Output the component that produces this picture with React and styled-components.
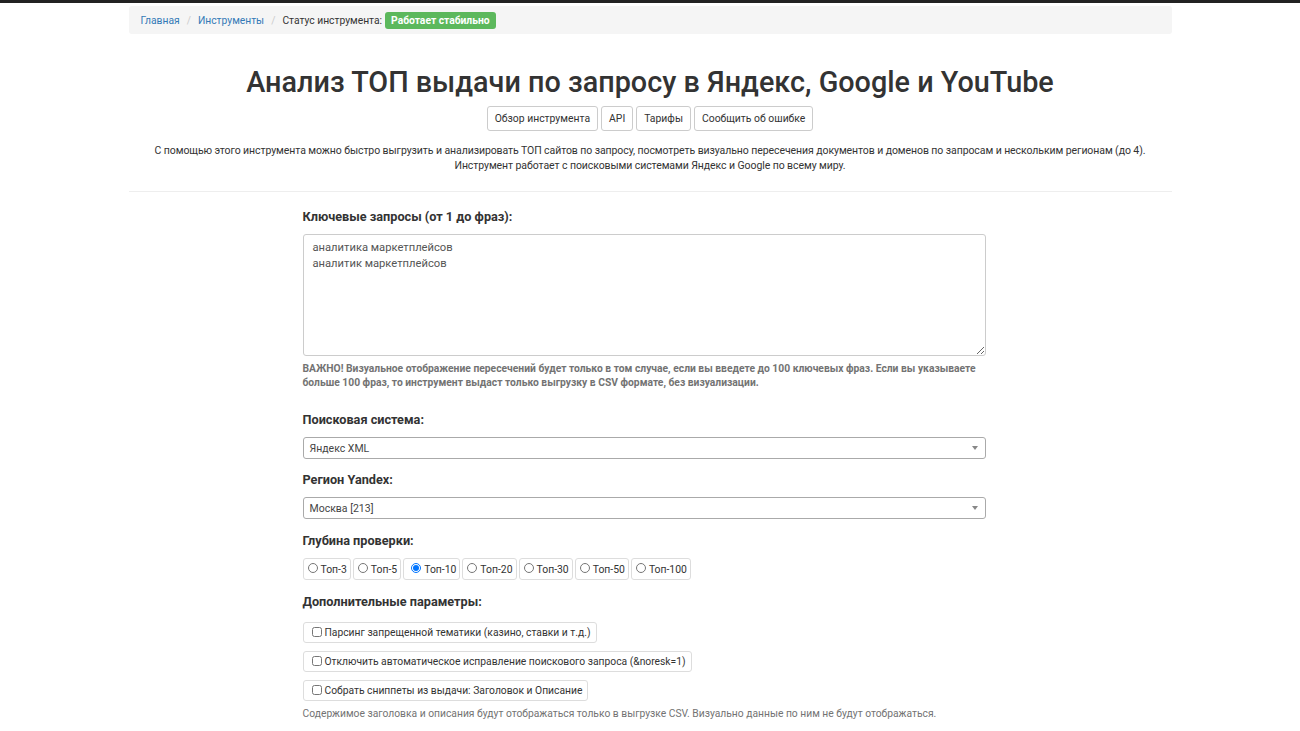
import React from 'react';
import styled, { createGlobalStyle } from 'styled-components';

const GlobalStyle = createGlobalStyle`
  body {
    margin: 0;
    background: #fff;
    font-family: Roboto, "Liberation Sans", Arial, sans-serif;
    color: #333;
  }
`

const TopLine = styled.div`
  height: 3px;
  background: #222;
`
const Container = styled.div`
  width: 1043px;
  margin: 0 auto;
`
const Breadcrumb = styled.div`
  margin-top: 3px;
  height: 28px;
  background: #f5f5f5;
  border-radius: 3px;
  display: flex;
  align-items: center;
  padding: 0 12px;
  font-size: 10.3px;
`
const Crumb = styled.a`
  color: #337ab7;
  text-decoration: none;
`
const Sep = styled.span`
  color: #ccc;
  padding: 0 7px;
`
const CrumbText = styled.span`
  color: #333;
`
const Badge = styled.span`
  margin-left: 3px;
  background: #5cb85c;
  color: #fff;
  font-weight: 700;
  font-size: 10.3px;
  padding: 2px 6px;
  border-radius: 3px;
  line-height: 13px;
`
const Title = styled.h1`
  margin: 31px 0 0;
  text-align: center;
  font-size: 28.8px;
  font-weight: 500;
  line-height: 34px;
  color: #333;
`
const Buttons = styled.div`
  display: flex;
  justify-content: center;
  gap: 3px;
  margin-top: 7px;
`
const Btn = styled.button`
  font-family: inherit;
  font-size: 10.4px;
  color: #333;
  background: #fff;
  border: 1px solid #ccc;
  border-radius: 3px;
  height: 25px;
  padding: 0 7px;
`
const Lead = styled.p`
  margin: 12px 0 0;
  text-align: center;
  font-size: 10.5px;
  line-height: 15px;
  color: #333;
  letter-spacing: -0.08px;
`
const Hr = styled.hr`
  border: none;
  border-top: 1px solid #eee;
  margin: 18px 0 0;
`
const Form = styled.div`
  width: 683px;
  margin-left: 174px;
  padding-top: 17px;
`
const Label = styled.div`
  font-size: 12.7px;
  font-weight: 700;
  color: #333;
  line-height: 16px;
  margin: ${p => p.$top || 0}px 0 9px;
`
const TextArea = styled.textarea`
  display: block;
  box-sizing: border-box;
  width: 100%;
  height: 122px;
  border: 1px solid #ccc;
  border-radius: 3px;
  font-family: inherit;
  font-size: 11.2px;
  line-height: 16px;
  color: #555;
  padding: 5px 9px;
  resize: vertical;
`
const Help = styled.div`
  margin-top: 6px;
  font-size: 10.3px;
  line-height: 14px;
  color: #737373;
  font-weight: ${p => (p.$bold ? 700 : 400)};
`
const Select = styled.div`
  box-sizing: border-box;
  height: 22px;
  border: 1px solid #aaa;
  border-radius: 3px;
  display: flex;
  align-items: center;
  justify-content: space-between;
  padding: 0 6px;
  font-size: 10.5px;
  color: #444;
`
const Arrow = styled.span`
  width: 0;
  height: 0;
  border-left: 3px solid transparent;
  border-right: 3px solid transparent;
  border-top: 4px solid #888;
  margin-right: 1px;
`
const Radios = styled.div`
  display: flex;
  gap: 2px;
`
const Option = styled.label`
  display: flex;
  align-items: center;
  box-sizing: border-box;
  height: 22px;
  border: 1px solid #ddd;
  border-radius: 3px;
  padding: 0 3px 0 ${p => (p.$wide ? 7 : 4)}px;
  font-size: 10.4px;
  color: #333;
  input {
    margin: 0 3px 2px 0;
    width: 10px;
    height: 10px;
  }
`
const Checks = styled.div`
  display: flex;
  flex-direction: column;
  align-items: flex-start;
  gap: 8px;
  margin-top: 12px;
`
const Check = styled.label`
  display: flex;
  align-items: center;
  box-sizing: border-box;
  height: 21px;
  border: 1px solid #ddd;
  border-radius: 3px;
  padding: 0 5px 0 8px;
  font-size: 10.3px;
  color: #333;
  input {
    margin: 0 3px 2px 0;
    width: 10px;
    height: 10px;
  }
`

const depths = ['Топ-3', 'Топ-5', 'Топ-10', 'Топ-20', 'Топ-30', 'Топ-50', 'Топ-100'];
const extras = [
  'Парсинг запрещенной тематики (казино, ставки и т.д.)',
  'Отключить автоматическое исправление поискового запроса (&noresk=1)',
  'Собрать сниппеты из выдачи: Заголовок и Описание',
];

const App = () => {
  return (
    <>
      <GlobalStyle />
      <TopLine />
      <Container>
        <Breadcrumb>
          <Crumb href="#">Главная</Crumb>
          <Sep>/</Sep>
          <Crumb href="#">Инструменты</Crumb>
          <Sep>/</Sep>
          <CrumbText>Статус инструмента:</CrumbText>
          <Badge>Работает стабильно</Badge>
        </Breadcrumb>
        <Title>Анализ ТОП выдачи по запросу в Яндекс, Google и YouTube</Title>
        <Buttons>
          <Btn>Обзор инструмента</Btn>
          <Btn>API</Btn>
          <Btn>Тарифы</Btn>
          <Btn>Сообщить об ошибке</Btn>
        </Buttons>
        <Lead>
          С помощью этого инструмента можно быстро выгрузить и анализировать ТОП сайтов по запросу, посмотреть визуально пересечения документов и доменов по запросам и нескольким регионам (до 4).
          <br />
          Инструмент работает с поисковыми системами Яндекс и Google по всему миру.
        </Lead>
        <Hr />
        <Form>
          <Label>Ключевые запросы (от 1 до фраз):</Label>
          <TextArea defaultValue={'аналитика маркетплейсов\nаналитик маркетплейсов'} />
          <Help $bold>
            ВАЖНО! Визуальное отображение пересечений будет только в том случае, если вы введете до 100 ключевых фраз. Если вы указываете больше 100 фраз, то инструмент выдаст только выгрузку в CSV формате, без визуализации.
          </Help>
          <Label $top={22}>Поисковая система:</Label>
          <Select>Яндекс XML<Arrow /></Select>
          <Label $top={13}>Регион Yandex:</Label>
          <Select>Москва [213]<Arrow /></Select>
          <Label $top={14}>Глубина проверки:</Label>
          <Radios>
            {depths.map(d => (
              <Option key={d} $wide={d === 'Топ-10'}>
                <input type="radio" name="depth" defaultChecked={d === 'Топ-10'} />
                {d}
              </Option>
            ))}
          </Radios>
          <Label $top={14}>Дополнительные параметры:</Label>
          <Checks>
            {extras.map(e => (
              <Check key={e}>
                <input type="checkbox" />
                {e}
              </Check>
            ))}
          </Checks>
          <Help>Содержимое заголовка и описания будут отображаться только в выгрузке CSV. Визуально данные по ним не будут отображаться.</Help>
        </Form>
      </Container>
    </>
  );
};

export default App;
